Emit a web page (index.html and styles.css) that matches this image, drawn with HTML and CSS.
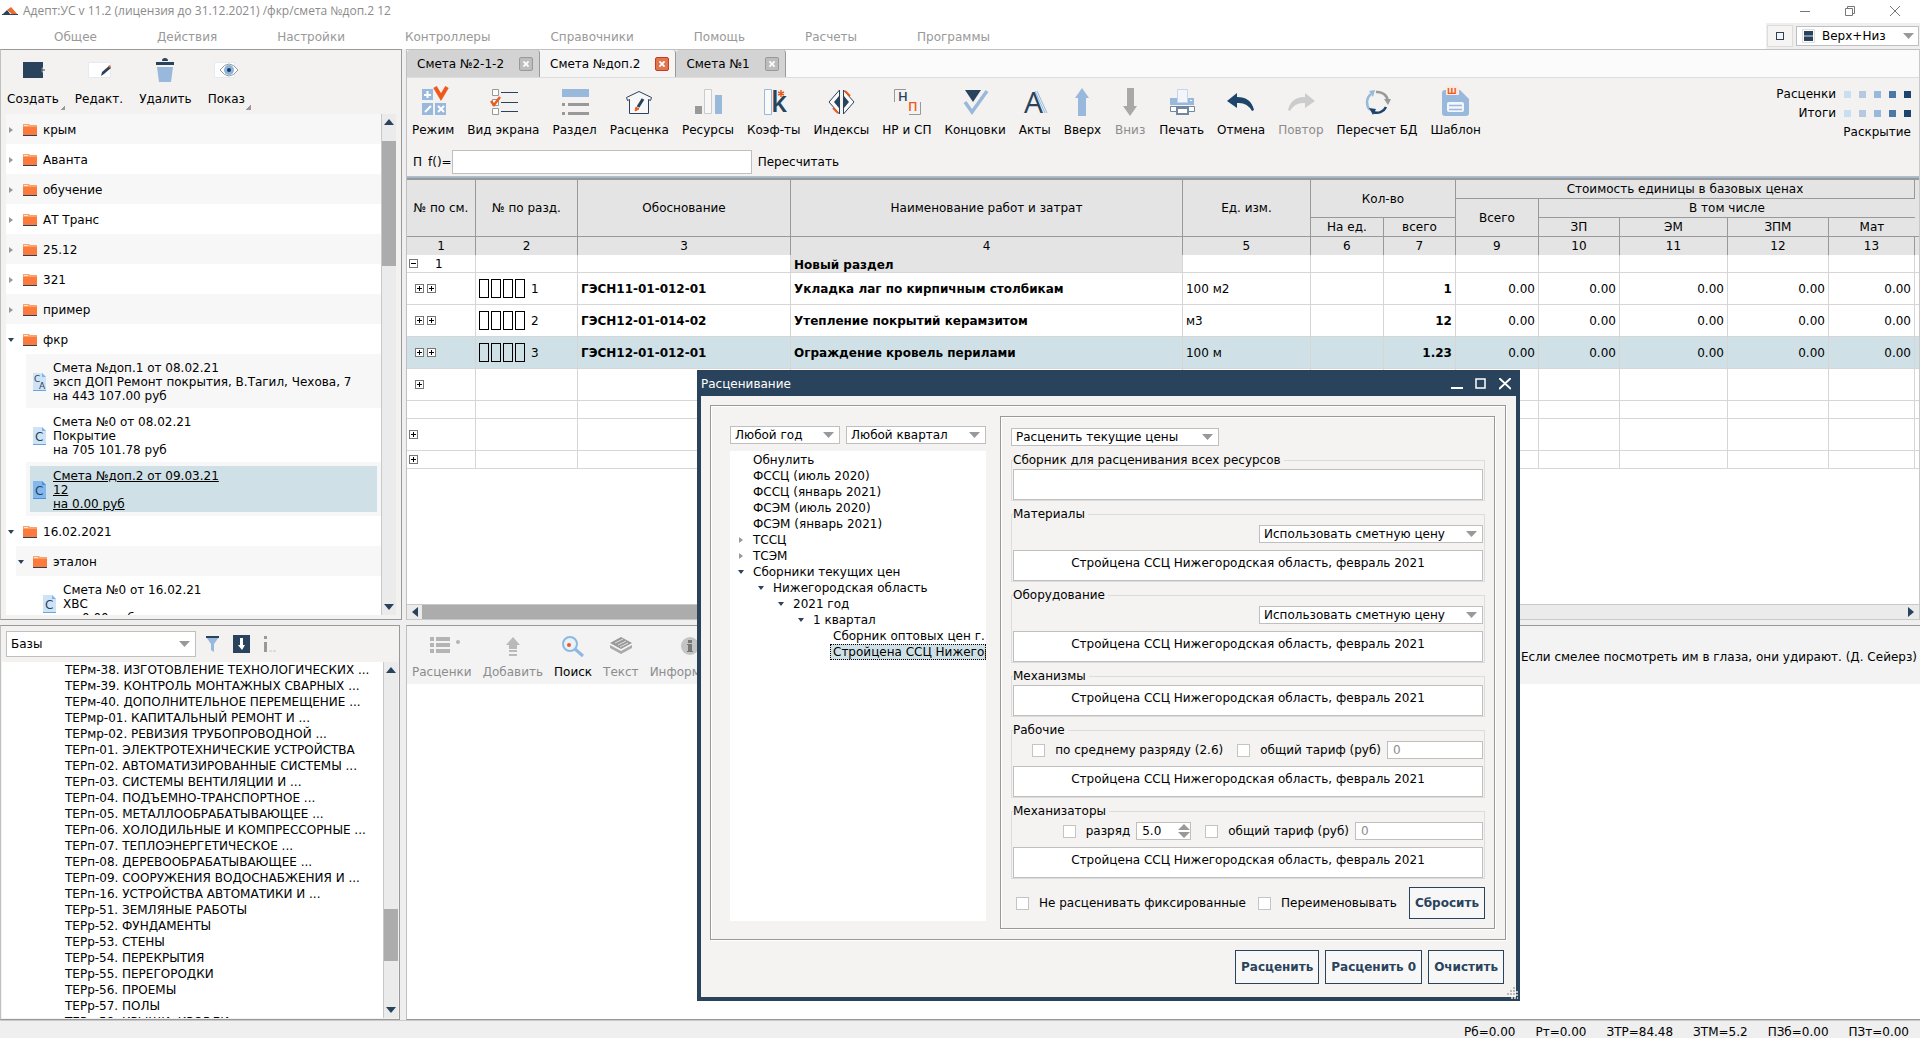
FILE: index.html
```html
<!DOCTYPE html>
<html lang="ru">
<head>
    <meta charset="UTF-8">
    <meta name="viewport" content="width=device-width, initial-scale=1.0">
    <title>Адепт:УС</title>
    <link rel="stylesheet" href="styles.css">
</head>
<body>
    <!-- Общие значки -->
    <svg class="sprite" aria-hidden="true">
        <symbol id="folder" viewBox="0 0 14 12">
            <path d="M0 0h6l1 1h7v10H0z" fill="#f9a36c"/>
            <path d="M0 3h14v8H0z" fill="#fb7a3c"/>
            <path d="M1 1h4v1H1z" fill="#ffe6d6"/>
            <path d="M0 11h14v1H0z" fill="#2a435c"/>
        </symbol>
        <symbol id="doc" viewBox="0 0 14 18">
            <path d="M0 0h9l4 4v13H0z" fill="#cfe3f7"/>
            <path d="M9 0l4 4H9z" fill="#7fb2e6"/>
            <path d="M0 17h13v1H0z" fill="#6aa5e0"/>
        </symbol>
        <symbol id="doc-open" viewBox="0 0 14 18">
            <path d="M0 0h9l4 4v13H0z" fill="#82b8ee"/>
            <path d="M9 0l4 4H9z" fill="#4d91d8"/>
            <path d="M0 17h13v1H0z" fill="#4d91d8"/>
        </symbol>
        <symbol id="closed" viewBox="0 0 6 8"><path d="M1 1l4 3-4 3z" fill="#999"/></symbol>
        <symbol id="opened" viewBox="0 0 6 8"><path d="M0 2h6L3 6z" fill="#2a435c"/></symbol>
        <symbol id="cross" viewBox="0 0 14 14"><path d="M4 4l6 6M10 4l-6 6" stroke="#fff" stroke-width="2"/></symbol>
        <symbol id="up" viewBox="0 0 10 6"><path d="M0 6h10L5 0z" fill="#2a435c"/></symbol>
        <symbol id="down" viewBox="0 0 10 6"><path d="M0 0h10L5 6z" fill="#2a435c"/></symbol>
        <symbol id="left" viewBox="0 0 6 10"><path d="M6 0v10L0 5z" fill="#2a435c"/></symbol>
        <symbol id="right" viewBox="0 0 6 10"><path d="M0 0v10l6-5z" fill="#2a435c"/></symbol>
    </svg>

    <div class="app">
        <header class="titlebar">
            <svg class="logo" viewBox="0 0 16 8"><path d="M0 8l5-5 4 5z" fill="#2a435c"/><path d="M5 3l4-3 7 8h-5z" fill="#ea6a2f"/><path d="M0 7h16v1H0z" fill="#2a435c"/></svg>
            <span class="title">Адепт:УС v 11.2 (лицензия до 31.12.2021) /фкр/смета №доп.2 12</span>
            <div class="window-buttons">
                <button aria-label="Свернуть"><svg viewBox="0 0 10 10"><path d="M0 5.5h10" stroke="#777"/></svg></button>
                <button aria-label="Восстановить"><svg viewBox="0 0 10 10"><path d="M.5 2.5h7v7h-7zM2.5 2.5v-2h7v7h-2" fill="none" stroke="#777"/></svg></button>
                <button aria-label="Закрыть"><svg viewBox="0 0 10 10"><path d="M0 0l10 10M10 0L0 10" stroke="#777"/></svg></button>
            </div>
        </header>

        <div class="menubar">
            <nav class="menu">
                <a href="#">Общее</a>
                <a href="#">Действия</a>
                <a href="#">Настройки</a>
                <a href="#">Контроллеры</a>
                <a href="#">Справочники</a>
                <a href="#">Помощь</a>
                <a href="#">Расчеты</a>
                <a href="#">Программы</a>
            </nav>
            <div class="view-switch">
                <button class="view-button" aria-label="Одно окно"><span></span></button>
                <select class="select layout" aria-label="Расположение"><option>Верх+Низ</option></select>
            </div>
        </div>

        <main class="workspace">
            <!-- Дерево смет -->
            <section class="panel projects">
                <div class="projects-tools">
                    <button class="tool menu-tool">
                        <svg viewBox="0 0 24 26"><path d="M2 5h20v5a3.5 3.5 0 0 0 0 6v5H2z" fill="#2a435c"/><path d="M18 13h6M21 10v6" stroke="#2a435c"/></svg>
                        <span>Создать</span>
                    </button>
                    <button class="tool">
                        <svg viewBox="0 0 24 26"><path d="M1.5 5.5h22v15h-22z" fill="#fff" stroke="#e3eaf2"/><path d="M14 19l1-4 7-6 2 2-7 6z" fill="#2a435c"/><path d="M21 9l2-1 1 2-1 1z" fill="#ea6a2f"/></svg>
                        <span>Редакт.</span>
                    </button>
                    <button class="tool">
                        <svg viewBox="0 0 24 26"><path d="M9 4a3 3 0 0 1 6 0z" fill="#2a435c"/><path d="M3 5h18v3H3z" fill="#2a435c"/><path d="M4 10h16l-2 15H6z" fill="#98b9dc"/></svg>
                        <span>Удалить</span>
                    </button>
                    <button class="tool menu-tool">
                        <svg viewBox="0 0 24 26"><path d="M.5 5.5h20v15H.5z" fill="#fff" stroke="#e3eaf2"/><path d="M6 13q9-12 18 0q-9 12-18 0z" fill="#fff" stroke="#999"/><circle cx="15" cy="13" r="5" fill="#8db4df"/><circle cx="15" cy="13" r="2" fill="#1c3a5c"/></svg>
                        <span>Показ</span>
                    </button>
                </div>
                <div class="scroll-area">
                    <ul class="tree">
                        <li class="folder odd"><svg class="arrow"><use href="#closed"/></svg><svg class="icon"><use href="#folder"/></svg>крым</li>
                        <li class="folder"><svg class="arrow"><use href="#closed"/></svg><svg class="icon"><use href="#folder"/></svg>Аванта</li>
                        <li class="folder odd"><svg class="arrow"><use href="#closed"/></svg><svg class="icon"><use href="#folder"/></svg>обучение</li>
                        <li class="folder"><svg class="arrow"><use href="#closed"/></svg><svg class="icon"><use href="#folder"/></svg>АТ Транс</li>
                        <li class="folder odd"><svg class="arrow"><use href="#closed"/></svg><svg class="icon"><use href="#folder"/></svg>25.12</li>
                        <li class="folder"><svg class="arrow"><use href="#closed"/></svg><svg class="icon"><use href="#folder"/></svg>321</li>
                        <li class="folder odd"><svg class="arrow"><use href="#closed"/></svg><svg class="icon"><use href="#folder"/></svg>пример</li>
                        <li class="folder"><svg class="arrow"><use href="#opened"/></svg><svg class="icon"><use href="#folder"/></svg>фкр</li>
                        <li class="estimate odd"><svg class="doc" viewBox="0 0 14 18"><use href="#doc"/><text x="1" y="9" class="doc-letter small">С</text><text x="6" y="16" class="doc-letter small">А</text></svg><span>Смета №доп.1 от 08.02.21<br>эксп ДОП Ремонт покрытия, В.Тагил, Чехова, 7<br>на 443 107.00 руб</span></li>
                        <li class="estimate"><svg class="doc" viewBox="0 0 14 18"><use href="#doc"/><text x="2" y="14" class="doc-letter">С</text></svg><span>Смета №0 от 08.02.21<br>Покрытие<br>на 705 101.78 руб</span></li>
                        <li class="estimate odd current"><svg class="doc" viewBox="0 0 14 18"><use href="#doc-open"/><text x="2" y="14" class="doc-letter">С</text></svg><span>Смета №доп.2 от 09.03.21<br>12<br>на 0.00 руб</span></li>
                        <li class="folder"><svg class="arrow"><use href="#opened"/></svg><svg class="icon"><use href="#folder"/></svg>16.02.2021</li>
                        <li class="folder odd nested"><svg class="arrow"><use href="#opened"/></svg><svg class="icon"><use href="#folder"/></svg>эталон</li>
                        <li class="estimate nested"><svg class="doc" viewBox="0 0 14 18"><use href="#doc"/><text x="2" y="14" class="doc-letter">С</text></svg><span>Смета №0 от 16.02.21<br>ХВС<br>на 0.00 руб</span></li>
                    </ul>
                    <div class="scrollbar">
                        <svg><use href="#up"/></svg>
                        <div class="track"><div class="thumb" style="height: 28%"></div></div>
                        <svg><use href="#down"/></svg>
                    </div>
                </div>
            </section>

            <!-- Смета -->
            <section class="editor">
                <div class="tabs">
                    <div class="tab"><a href="#">Смета №2-1-2</a><button aria-label="Закрыть вкладку"><svg><use href="#cross"/></svg></button></div>
                    <div class="tab active"><a href="#">Смета №доп.2</a><button aria-label="Закрыть вкладку"><svg><use href="#cross"/></svg></button></div>
                    <div class="tab"><a href="#">Смета №1</a><button aria-label="Закрыть вкладку"><svg><use href="#cross"/></svg></button></div>
                </div>
                <div class="editor-tools">
                    <div class="toolbar">
                        <button class="tool">
                            <svg viewBox="0 0 32 32"><path d="M5 3h11v11H5zM5 17h11v12H5zM18 17h11v12H18z" fill="#98b9dc"/><path d="M7 9h7M10.5 5v7M8 26l6-6M21 20l6 6M27 20l-6 6" stroke="#fff" stroke-width="2"/><path d="M18 1l6 10 6-10" fill="none" stroke="#ee5a1c" stroke-width="4"/></svg>
                            <span>Режим</span>
                        </button>
                        <button class="tool">
                            <svg viewBox="0 0 32 32"><path d="M5.5 3.5h6v6h-6zM5.5 13.5h6v6h-6zM5.5 22.5h6v6h-6z" fill="#fff" stroke="#999"/><path d="M14 6.5h17M14 16.5h17M14 25.5h17" stroke="#2a435c"/><path d="M4 15l3 4 6-8" fill="none" stroke="#ee5a1c" stroke-width="2.5"/></svg>
                            <span>Вид экрана</span>
                        </button>
                        <button class="tool">
                            <svg viewBox="0 0 32 32"><path d="M3 3h27v8H3z" fill="#98b9dc"/><path d="M3 17h3v3H3zM9 17h21v3H9zM3 26h3v3H3zM9 26h21v3H9z" fill="#999"/></svg>
                            <span>Раздел</span>
                        </button>
                        <button class="tool">
                            <svg viewBox="0 0 32 32"><path d="M16 5.5L3.5 11.5l1 3 2-1V27.5h19V13.5l2 1 1-3z" fill="#f8f8f8" stroke="#2a435c"/><path d="M15 21l5-8" stroke="#2a435c" stroke-width="3"/><path d="M12 25l1-4 3 2z" fill="#ee5a1c" stroke="#ee5a1c"/></svg>
                            <span>Расценка</span>
                        </button>
                        <button class="tool">
                            <svg viewBox="0 0 32 32"><path d="M3 20h7v8H3z" fill="#999"/><path d="M12.5 3.5h7v24h-7z" fill="#f8f8f8" stroke="#ccc"/><path d="M23 9h7v19h-7z" fill="#98b9dc"/></svg>
                            <span>Ресурсы</span>
                        </button>
                        <button class="tool">
                            <svg viewBox="0 0 32 32"><path d="M6.5 3.5h7v25h-7z" fill="#fafafa" stroke="#98b9dc"/><text x="13" y="26" class="letter big">k</text><path d="M23 4v7M20 6l6 3M26 6l-6 3" stroke="#ee5a1c" stroke-width="1.5"/></svg>
                            <span>Коэф-ты</span>
                        </button>
                        <button class="tool">
                            <svg viewBox="0 0 32 32"><path d="M14.5 4v24L4 16zM18.5 4v24L29 16z" fill="#fafafa" stroke="#2a435c"/><path d="M14 10v12l-5-6zM19 10v12l5-6z" fill="#2a435c"/><path d="M20 5l5 5M13 27l-5-5" stroke="#ee5a1c" stroke-width="2"/></svg>
                            <span>Индексы</span>
                        </button>
                        <button class="tool">
                            <svg viewBox="0 0 32 32"><path d="M3.5 16V3.5H15M29.5 16V28.5H18" fill="none" stroke="#999"/><text x="7" y="15" class="letter mid">Н</text><text x="17" y="25" class="letter mid orange">П</text></svg>
                            <span>НР и СП</span>
                        </button>
                        <button class="tool">
                            <svg viewBox="0 0 32 32"><path d="M6 4h16l-8 12z" fill="#2a435c"/><path d="M6 16l7 10L28 5" fill="none" stroke="#98b9dc" stroke-width="3.5"/></svg>
                            <span>Концовки</span>
                        </button>
                        <button class="tool">
                            <svg viewBox="0 0 32 32"><path d="M18 5l10 22M16 5l10 22" stroke="#98b9dc"/><text x="5" y="27" class="letter huge">А</text></svg>
                            <span>Акты</span>
                        </button>
                        <button class="tool">
                            <svg viewBox="0 0 32 32"><path d="M16 2l7 10h-3v18h-8V12H9z" fill="#98b9dc"/></svg>
                            <span>Вверх</span>
                        </button>
                        <button class="tool" disabled>
                            <svg viewBox="0 0 32 32"><path d="M16 30l7-10h-3V2h-7v18H9z" fill="#a8a8a8"/></svg>
                            <span>Вниз</span>
                        </button>
                        <button class="tool">
                            <svg viewBox="0 0 32 32"><path d="M4 12h24v7H4z" fill="#98b9dc"/><path d="M11.5 3.5h10v13h-10z" fill="#f2f6fc" stroke="#c4d6ea"/><path d="M4.5 20.5h24v5h-24z" fill="#fff" stroke="#7187a0"/><path d="M11 22h11v6H11z" fill="#fff" stroke="#7187a0" stroke-width="2"/><path d="M24 14.5h2" stroke="#fff"/></svg>
                            <span>Печать</span>
                        </button>
                        <button class="tool">
                            <svg viewBox="0 0 32 32"><path d="M2 15l10-8v4q14 0 17 13l-2 1Q22 16 12 17v5z" fill="#1d446b"/></svg>
                            <span>Отмена</span>
                        </button>
                        <button class="tool" disabled>
                            <svg viewBox="0 0 32 32"><path d="M30 15L20 7v4Q6 11 3 24l2 1q5-9 15-8v5z" fill="#ccc"/></svg>
                            <span>Повтор</span>
                        </button>
                        <button class="tool">
                            <svg viewBox="0 0 32 32"><g fill="none" stroke-width="2.5"><path d="M9 24a11 11 0 0 1 1-16" stroke="#98b9dc"/><path d="M15 6a10.5 10.5 0 0 1 12 10" stroke="#999"/><path d="M25 21a10 10 0 0 1-13 5" stroke="#1d446b"/></g><path d="M8 5l6-1-2 7z" fill="#98b9dc"/><path d="M23 13h7l-3 6z" fill="#999"/><path d="M8 22l7 1-3 6z" fill="#1d446b"/></svg>
                            <span>Пересчет БД</span>
                        </button>
                        <button class="tool">
                            <svg viewBox="0 0 32 32"><path d="M5 4h15l9 9v14a3 3 0 0 1-3 3H5a3 3 0 0 1-3-3V7a3 3 0 0 1 3-3z" fill="#98b9dc"/><rect x="7" y="16" width="17" height="10" rx="2" fill="#f3f7fb"/><path d="M9 19.5h13M9 23.5h13" stroke="#98b9dc" stroke-width="1.5"/><path d="M6 0h13v9H6z" fill="#fbe9df"/><text x="7" y="8" class="letter tiny">Ш</text></svg>
                            <span>Шаблон</span>
                        </button>
                        <div class="levels">
                            <div class="level-row">Расценки <i class="l1"></i><i class="l2"></i><i class="l3"></i><i class="l4"></i><i class="l5"></i></div>
                            <div class="level-row">Итоги <i class="l1"></i><i class="l2"></i><i class="l3"></i><i class="l4"></i><i class="l5"></i></div>
                            <div class="level-row">Раскрытие</div>
                        </div>
                    </div>
                    <div class="formula">
                        <span>П</span>
                        <label for="formula">f()=</label>
                        <input type="text" id="formula">
                        <button class="link-button">Пересчитать</button>
                    </div>
                </div>
                <div class="sheet">
                    <table class="grid">
                        <colgroup>
                            <col class="w-num"><col class="w-sec"><col class="w-code"><col><col class="w-unit"><col class="w-per"><col class="w-qty">
                            <col class="w-total"><col class="w-zp"><col class="w-em"><col class="w-zpm"><col class="w-mat"><col class="w-tail">
                        </colgroup>
                        <thead>
                            <tr>
                                <th rowspan="3">№ по см.</th>
                                <th rowspan="3">№ по разд.</th>
                                <th rowspan="3">Обоснование</th>
                                <th rowspan="3">Наименование работ и затрат</th>
                                <th rowspan="3">Ед. изм.</th>
                                <th colspan="2" rowspan="2">Кол-во</th>
                                <th colspan="5">Стоимость единицы в базовых ценах</th>
                                <th rowspan="3"></th>
                            </tr>
                            <tr><th rowspan="2">Всего</th><th colspan="4">В том числе</th></tr>
                            <tr><th>На ед.</th><th>всего</th><th>ЗП</th><th>ЭМ</th><th>ЗПМ</th><th>Мат</th></tr>
                            <tr class="numbers"><th>1</th><th>2</th><th>3</th><th>4</th><th>5</th><th>6</th><th>7</th><th>9</th><th>10</th><th>11</th><th>12</th><th>13</th><th></th></tr>
                        </thead>
                        <tbody>
                            <tr class="short"><td><div class="toggles outer"><button class="toggle" aria-label="Свернуть раздел"></button><span>1</span></div></td><td></td><td></td><td class="section-name">Новый раздел</td><td></td><td></td><td></td><td></td><td></td><td></td><td></td><td></td><td></td></tr>
                            <tr><td><div class="toggles"><button class="toggle plus" aria-label="Раскрыть"></button><button class="toggle plus" aria-label="Раскрыть все"></button></div></td><td><div class="marks"><i></i><i></i><i></i><i></i><span>1</span></div></td><td class="bold">ГЭСН11-01-012-01</td><td class="bold">Укладка лаг по кирпичным столбикам</td><td>100 м2</td><td></td><td class="number bold">1</td><td class="number">0.00</td><td class="number">0.00</td><td class="number">0.00</td><td class="number">0.00</td><td class="number">0.00</td><td></td></tr>
                            <tr><td><div class="toggles"><button class="toggle plus" aria-label="Раскрыть"></button><button class="toggle plus" aria-label="Раскрыть все"></button></div></td><td><div class="marks"><i></i><i></i><i></i><i></i><span>2</span></div></td><td class="bold">ГЭСН12-01-014-02</td><td class="bold">Утепление покрытий керамзитом</td><td>м3</td><td></td><td class="number bold">12</td><td class="number">0.00</td><td class="number">0.00</td><td class="number">0.00</td><td class="number">0.00</td><td class="number">0.00</td><td></td></tr>
                            <tr class="selected"><td><div class="toggles"><button class="toggle plus" aria-label="Раскрыть"></button><button class="toggle plus" aria-label="Раскрыть все"></button></div></td><td><div class="marks"><i></i><i></i><i></i><i></i><span>3</span></div></td><td class="bold">ГЭСН12-01-012-01</td><td class="bold">Ограждение кровель перилами</td><td>100 м</td><td></td><td class="number bold">1.23</td><td class="number">0.00</td><td class="number">0.00</td><td class="number">0.00</td><td class="number">0.00</td><td class="number">0.00</td><td></td></tr>
                            <tr><td><div class="toggles"><button class="toggle plus" aria-label="Раскрыть"></button></div></td><td></td><td></td><td></td><td></td><td></td><td></td><td></td><td></td><td></td><td></td><td></td><td></td></tr>
                            <tr class="short"><td></td><td></td><td></td><td></td><td></td><td></td><td></td><td></td><td></td><td></td><td></td><td></td><td></td></tr>
                            <tr><td><div class="toggles outer"><button class="toggle plus" aria-label="Раскрыть"></button></div></td><td></td><td></td><td></td><td></td><td></td><td></td><td></td><td></td><td></td><td></td><td></td><td></td></tr>
                            <tr class="short"><td><div class="toggles outer"><button class="toggle plus" aria-label="Раскрыть"></button></div></td><td></td><td></td><td></td><td></td><td></td><td></td><td></td><td></td><td></td><td></td><td></td><td></td></tr>
                        </tbody>
                    </table>
                </div>
                <div class="scrollbar horizontal">
                    <svg><use href="#left"/></svg>
                    <div class="track"><div class="thumb" style="width: 48%"></div></div>
                    <svg><use href="#right"/></svg>
                </div>
            </section>

            <!-- Нормативные базы -->
            <section class="panel bases">
                <div class="bases-tools">
                    <select class="select" aria-label="Раздел справочника"><option>Базы</option></select>
                    <button class="icon-button" aria-label="Фильтр"><svg viewBox="0 0 17 18"><path d="M0 2h13L8 9v8l-3-2V9z" fill="#98b9dc"/><path d="M0 1h13v2H0z" fill="#2a435c"/></svg></button>
                    <button class="icon-button" aria-label="Загрузить"><svg viewBox="0 0 17 18"><path d="M0 0h17v18H0z" fill="#2a435c"/><path d="M7 3h3v7h2l-3 5-4-5h2z" fill="#fff"/></svg></button>
                    <button class="icon-button" aria-label="Сведения"><svg viewBox="0 0 17 18"><path d="M4 1h3v3H4zM4 7h3v10H4z" fill="#999"/><path d="M9 15h3v2H9zM13 15h3v2h-3z" fill="#ddd"/></svg></button>
                </div>
                <div class="scroll-area">
                    <ul class="base-list">
                        <li>ТЕРм-38. ИЗГОТОВЛЕНИЕ ТЕХНОЛОГИЧЕСКИХ ...</li>
                        <li>ТЕРм-39. КОНТРОЛЬ МОНТАЖНЫХ СВАРНЫХ ...</li>
                        <li>ТЕРм-40. ДОПОЛНИТЕЛЬНОЕ ПЕРЕМЕЩЕНИЕ ...</li>
                        <li>ТЕРмр-01. КАПИТАЛЬНЫЙ РЕМОНТ И ...</li>
                        <li>ТЕРмр-02. РЕВИЗИЯ ТРУБОПРОВОДНОЙ ...</li>
                        <li>ТЕРп-01. ЭЛЕКТРОТЕХНИЧЕСКИЕ УСТРОЙСТВА</li>
                        <li>ТЕРп-02. АВТОМАТИЗИРОВАННЫЕ СИСТЕМЫ ...</li>
                        <li>ТЕРп-03. СИСТЕМЫ ВЕНТИЛЯЦИИ И ...</li>
                        <li>ТЕРп-04. ПОДЪЕМНО-ТРАНСПОРТНОЕ ...</li>
                        <li>ТЕРп-05. МЕТАЛЛООБРАБАТЫВАЮЩЕЕ ...</li>
                        <li>ТЕРп-06. ХОЛОДИЛЬНЫЕ И КОМПРЕССОРНЫЕ ...</li>
                        <li>ТЕРп-07. ТЕПЛОЭНЕРГЕТИЧЕСКОЕ ...</li>
                        <li>ТЕРп-08. ДЕРЕВООБРАБАТЫВАЮЩЕЕ ...</li>
                        <li>ТЕРп-09. СООРУЖЕНИЯ ВОДОСНАБЖЕНИЯ И ...</li>
                        <li>ТЕРп-16. УСТРОЙСТВА АВТОМАТИКИ И ...</li>
                        <li>ТЕРр-51. ЗЕМЛЯНЫЕ РАБОТЫ</li>
                        <li>ТЕРр-52. ФУНДАМЕНТЫ</li>
                        <li>ТЕРр-53. СТЕНЫ</li>
                        <li>ТЕРр-54. ПЕРЕКРЫТИЯ</li>
                        <li>ТЕРр-55. ПЕРЕГОРОДКИ</li>
                        <li>ТЕРр-56. ПРОЕМЫ</li>
                        <li>ТЕРр-57. ПОЛЫ</li>
                        <li>ТЕРр-58. КРЫШИ, КРОВЛИ</li>
                    </ul>
                    <div class="scrollbar">
                        <svg><use href="#up"/></svg>
                        <div class="track lower"><div class="thumb" style="height: 19%"></div></div>
                        <svg><use href="#down"/></svg>
                    </div>
                </div>
            </section>

            <section class="panel search">
                <div class="search-tools">
                    <button class="tool" disabled>
                        <svg viewBox="0 0 32 24"><path d="M4 3h4v4H4zM10 3h14v4H10zM4 9h4v4H4zM10 9h14v4H10zM4 15h4v4H4zM10 15h14v4H10z" fill="#b4b4b4"/><circle cx="32" cy="8" r="2" fill="#b4b4b4"/></svg>
                        <span>Расценки</span>
                    </button>
                    <button class="tool" disabled>
                        <svg viewBox="0 0 32 24"><path d="M16 3l7 8h-3v4h-8v-4H9zM12 16h8v2h-8zM12 20h8v2h-8z" fill="#b9b9b9"/></svg>
                        <span>Добавить</span>
                    </button>
                    <button class="tool">
                        <svg viewBox="0 0 32 24"><circle cx="13" cy="10" r="7" fill="#e9f2fb" stroke="#8db8e2" stroke-width="2"/><path d="M18 15l8 7" stroke="#8db8e2" stroke-width="3"/><circle cx="12" cy="11" r="2" fill="#ee5a1c"/></svg>
                        <span>Поиск</span>
                    </button>
                    <button class="tool" disabled>
                        <svg viewBox="0 0 32 24"><path d="M5 11l11 6 11-6v3l-11 6-11-6z" fill="#aaa"/><path d="M5 9l11-6 11 6-11 6z" fill="#999"/><path d="M10 9l8-4M13 11l8-4M15 13l8-4" stroke="#e2e2e2"/></svg>
                        <span>Текст</span>
                    </button>
                    <button class="tool" disabled>
                        <svg viewBox="0 0 32 24"><circle cx="16" cy="12" r="9" fill="#c4c4c4"/><path d="M14 6h4v3h-4zM13 10h5v7h1v1h-6v-1h1v-6h-1z" fill="#777"/></svg>
                        <span>Информация</span>
                    </button>
                    <span class="quote">Если смелее посмотреть им в глаза, они удирают. (Д. Сейерз)</span>
                </div>
            </section>
        </main>

        <footer class="statusbar">
            <span>Рб=0.00</span>
            <span>Рт=0.00</span>
            <span>ЗТР=84.48</span>
            <span>ЗТМ=5.2</span>
            <span>ПЗб=0.00</span>
            <span>ПЗт=0.00</span>
        </footer>
    </div>

    <!-- Окно расценивания -->
    <div class="dialog" role="dialog" aria-labelledby="dialog-title">
        <div class="dialog-title">
            <span id="dialog-title">Расценивание</span>
            <div class="dialog-buttons">
                <button aria-label="Свернуть"><svg viewBox="0 0 12 12"><path d="M0 10h12" stroke="#fff" stroke-width="2"/></svg></button>
                <button aria-label="Развернуть"><svg viewBox="0 0 12 12"><path d="M1 1h9v9H1z" fill="none" stroke="#fff" stroke-width="1.5"/></svg></button>
                <button aria-label="Закрыть"><svg viewBox="0 0 12 12"><path d="M0 0l12 11M12 0L0 11" stroke="#fff" stroke-width="2"/></svg></button>
            </div>
        </div>
        <div class="dialog-body">
            <div class="frame outer-frame">
                <div class="collections">
                    <div class="period">
                        <select class="select year" aria-label="Год"><option>Любой год</option></select>
                        <select class="select quarter" aria-label="Квартал"><option>Любой квартал</option></select>
                    </div>
                    <ul class="price-tree">
                        <li>Обнулить</li>
                        <li>ФССЦ (июль 2020)</li>
                        <li>ФССЦ (январь 2021)</li>
                        <li>ФСЭМ (июль 2020)</li>
                        <li>ФСЭМ (январь 2021)</li>
                        <li><svg><use href="#closed"/></svg>ТССЦ</li>
                        <li><svg><use href="#closed"/></svg>ТСЭМ</li>
                        <li><svg><use href="#opened"/></svg>Сборники текущих цен
                            <ul>
                                <li><svg><use href="#opened"/></svg>Нижегородская область
                                    <ul>
                                        <li><svg><use href="#opened"/></svg>2021 год
                                            <ul>
                                                <li><svg><use href="#opened"/></svg>1 квартал
                                                    <ul>
                                                        <li>Сборник оптовых цен г. Нижний Новгород</li>
                                                        <li><span class="chosen">Стройцена ССЦ Нижегородская область</span></li>
                                                    </ul>
                                                </li>
                                            </ul>
                                        </li>
                                    </ul>
                                </li>
                            </ul>
                        </li>
                    </ul>
                </div>
                <form class="frame pricing">
                    <select class="select mode" aria-label="Режим расценивания"><option>Расценить текущие цены</option></select>
                    <fieldset>
                        <legend>Сборник для расценивания всех ресурсов</legend>
                        <output class="source"></output>
                    </fieldset>
                    <fieldset>
                        <legend>Материалы</legend>
                        <div class="options"><select class="select price" aria-label="Цена материалов"><option>Использовать сметную цену</option></select></div>
                        <output class="source">Стройцена ССЦ Нижегородская область, февраль 2021</output>
                    </fieldset>
                    <fieldset>
                        <legend>Оборудование</legend>
                        <div class="options"><select class="select price" aria-label="Цена оборудования"><option>Использовать сметную цену</option></select></div>
                        <output class="source">Стройцена ССЦ Нижегородская область, февраль 2021</output>
                    </fieldset>
                    <fieldset>
                        <legend>Механизмы</legend>
                        <output class="source">Стройцена ССЦ Нижегородская область, февраль 2021</output>
                    </fieldset>
                    <fieldset>
                        <legend>Рабочие</legend>
                        <div class="options">
                            <label class="check"><input type="checkbox">по среднему разряду (2.6)</label>
                            <label class="check"><input type="checkbox">общий тариф (руб)</label>
                            <input type="text" class="rate short-rate" value="0" aria-label="Тариф рабочих" disabled>
                        </div>
                        <output class="source">Стройцена ССЦ Нижегородская область, февраль 2021</output>
                    </fieldset>
                    <fieldset>
                        <legend>Механизаторы</legend>
                        <div class="options">
                            <label class="check"><input type="checkbox">разряд</label>
                            <input type="number" class="grade" value="5.0" step="0.1" aria-label="Разряд механизаторов">
                            <label class="check"><input type="checkbox">общий тариф (руб)</label>
                            <input type="text" class="rate" value="0" aria-label="Тариф механизаторов" disabled>
                        </div>
                        <output class="source">Стройцена ССЦ Нижегородская область, февраль 2021</output>
                    </fieldset>
                    <div class="final-row">
                        <label class="check"><input type="checkbox">Не расценивать фиксированные</label>
                        <label class="check"><input type="checkbox">Переименовывать</label>
                        <button type="button" class="action">Сбросить</button>
                    </div>
                </form>
            </div>
            <div class="dialog-actions">
                <button class="action">Расценить</button>
                <button class="action">Расценить 0</button>
                <button class="action">Очистить</button>
            </div>
            <svg class="grip" viewBox="0 0 12 12"><path d="M7 0h2v2H7zM4 3h2v2H4zM7 3h2v2H7zM1 6h2v2H1zM4 6h2v2H4zM7 6h2v2H7zM10 4h2v2h-2zM10 7h2v2h-2zM5 10h2v2H5zM8 10h2v2H8zM11 10h1v2h-1z" fill="#bbb"/></svg>
        </div>
    </div>
</body>
</html>
```
FILE: styles.css
```css
* {
    box-sizing: border-box;
}
body {
    margin: 0;
    font-family: "DejaVu Sans", Verdana, sans-serif;
    font-size: 12px;
    line-height: 16px;
    color: #000;
    background-color: #efefef;
    overflow: hidden;
}
button, select, input {
    font: inherit;
    color: inherit;
    margin: 0;
}
button {
    padding: 0;
    border: 0;
    background: none;
    white-space: nowrap;
}
a {
    color: inherit;
    text-decoration: none;
}
ul {
    list-style: none;
    margin: 0;
    padding: 0;
}
svg {
    display: block;
    flex: none;
}
.sprite {
    display: none;
}
.app {
    height: 100vh;
    display: flex;
    flex-direction: column;
}

/* Заголовок и меню */
.titlebar {
    display: flex;
    align-items: center;
    height: 23px;
    padding: 0 20px 2px 2px;
    background-color: #fff;
    color: #8b8b8b;
    font-family: "Open Sans", sans-serif;
}
.logo {
    width: 16px;
    height: 8px;
    margin-right: 5px;
}
.title {
    flex: 1;
}
.window-buttons {
    display: flex;
    gap: 35px;
}
.window-buttons svg {
    width: 10px;
    height: 10px;
}
.menubar {
    display: flex;
    justify-content: space-between;
    height: 26px;
    background-color: #fff;
    color: #999;
}
.menu {
    display: flex;
    align-items: center;
    gap: 60px;
    padding: 2px 0 0 54px;
}
.view-switch {
    display: flex;
    align-items: center;
    gap: 3px;
    padding: 0 1px;
    background-color: #efefef;
    color: #000;
}
.view-button {
    display: flex;
    align-items: center;
    justify-content: center;
    width: 26px;
    height: 22px;
    border: 1px solid #dcdcdc;
    background-color: #f5f4f3;
}
.view-button span {
    width: 8px;
    height: 8px;
    border: 1px solid #2a435c;
}
.select {
    appearance: none;
    height: 18px;
    padding: 0 20px 0 4px;
    border: 1px solid #bfbfbf;
    border-radius: 0;
    line-height: 16px;
    background: #fff url("data:image/svg+xml,%3Csvg xmlns='http://www.w3.org/2000/svg' width='11' height='6'%3E%3Cpath d='M0 0h11L5.5 6z' fill='%23999'/%3E%3C/svg%3E") no-repeat right 5px center;
}
.select.layout {
    width: 123px;
    height: 20px;
    padding-left: 25px;
    background-image: url("data:image/svg+xml,%3Csvg xmlns='http://www.w3.org/2000/svg' width='11' height='6'%3E%3Cpath d='M0 0h11L5.5 6z' fill='%23999'/%3E%3C/svg%3E"), url("data:image/svg+xml,%3Csvg xmlns='http://www.w3.org/2000/svg' width='13' height='14'%3E%3Cpath d='M.5.5h12v13H.5z' fill='none' stroke='%23ddd'/%3E%3Cpath d='M2 2h9v4H2zM2 8h9v4H2z' fill='%232a435c'/%3E%3Cpath d='M2 6h9v2H2z' fill='%237f93a6'/%3E%3C/svg%3E");
    background-position: right 4px center, 5px center;
    background-repeat: no-repeat;
}

/* Рабочая область */
.workspace {
    flex: 1;
    min-height: 0;
    display: grid;
    grid-template-columns: 402px minmax(0, 1fr);
    grid-template-rows: minmax(0, 13fr) minmax(0, 9fr);
    gap: 5px 4px;
}
.panel {
    display: flex;
    flex-direction: column;
    min-height: 0;
    border: 1px solid #999;
    border-left-color: #c0c0c0;
}
.tool {
    display: flex;
    flex-direction: column;
    align-items: center;
    gap: 4px;
}
.tool:disabled {
    color: #8c8c8c;
}
.tool svg {
    width: 32px;
    height: 32px;
    overflow: visible;
}
.letter {
    font-family: "Open Sans", sans-serif;
    font-weight: 600;
    fill: #2a435c;
}
.letter.big {
    font-size: 28px;
}
.letter.huge {
    font-size: 30px;
    font-weight: 400;
}
.letter.mid {
    font-size: 13px;
}
.letter.orange {
    fill: #ee5a1c;
}
.letter.tiny {
    font-size: 9px;
    font-weight: 700;
    fill: #ee5a1c;
}
.scroll-area {
    flex: 1;
    min-height: 0;
    display: flex;
}
.scrollbar {
    width: 15px;
    flex: none;
    display: flex;
    flex-direction: column;
    align-items: center;
    padding: 5px 0;
    border-left: 1px solid #c9c9c9;
    background-color: #ebebeb;
}
.scrollbar svg {
    width: 10px;
    height: 6px;
}
.track {
    flex: 1;
    align-self: stretch;
    margin: 16px 0;
}
.track.lower {
    display: flex;
    flex-direction: column;
    justify-content: flex-end;
    margin-bottom: 46px;
}
.thumb {
    height: 100%;
    background-color: #acacac;
}
.scrollbar.horizontal {
    width: auto;
    height: 16px;
    flex-direction: row;
    padding: 0 5px;
    border: 1px solid #c9c9c9;
    border-width: 1px 0;
}
.horizontal svg {
    width: 6px;
    height: 10px;
}
.horizontal .track {
    margin: 0 5px 0 4px;
}

/* Дерево смет */
.projects {
    padding: 0 5px 4px;
    background-color: #f3f2f1;
}
.projects-tools {
    display: flex;
    gap: 16px;
    height: 64px;
    padding: 7px 0 0 1px;
}
.projects-tools .tool {
    justify-content: flex-start;
    gap: 8px;
    height: 54px;
}
.projects-tools .tool svg {
    width: 24px;
    height: 26px;
}
.menu-tool {
    background: linear-gradient(135deg, transparent 50%, #999 50%) no-repeat right bottom 1px / 5px 5px;
    padding-right: 6px;
    margin-right: -6px;
}
.tree {
    flex: 1;
    overflow: hidden;
    background-color: #fff;
}
.tree li {
    display: flex;
    align-items: center;
}
.tree .odd {
    background-color: #f7f7f7;
}
.folder {
    height: 30px;
    padding: 1px 0 0 2px;
}
.folder.nested {
    margin-left: 10px;
}
.arrow {
    width: 6px;
    height: 8px;
    margin-right: 9px;
}
.icon {
    width: 14px;
    height: 12px;
    margin-right: 6px;
}
.estimate {
    height: 54px;
    margin-left: 20px;
    padding: 1px 0 0 7px;
    line-height: 14px;
}
.estimate.nested {
    margin-left: 30px;
}
.doc {
    width: 14px;
    height: 18px;
    margin-right: 6px;
}
.doc-letter {
    font-size: 12px;
    fill: #2a435c;
}
.doc-letter.small {
    font-size: 9px;
}
.tree .estimate.current {
    border: 4px solid #f7f7f7;
    background-color: #cfe0e6;
    padding-left: 3px;
    text-decoration: underline;
}

/* Смета */
.editor {
    display: flex;
    flex-direction: column;
    min-height: 0;
    border-left: 1px solid #c0c0c0;
    border-right: 1px solid #c9c9c9;
}
.tabs {
    display: flex;
    height: 29px;
    border-top: 1px solid #c0c0c0;
    border-bottom: 1px solid #ddd;
    background-color: #fbfbfb;
}
.tab {
    display: flex;
    align-items: center;
    gap: 15px;
    padding: 0 6px 0 10px;
    border-right: 1px solid #999;
    border-radius: 3px 3px 0 0;
    background-color: #d3d3d3;
}
.tab.active {
    background-color: #f5f5f5;
}
.tab button {
    width: 14px;
    height: 14px;
    border: 1px solid #999;
    border-radius: 2px;
    background-color: #bdbdbd;
}
.tab.active button {
    border-color: #cf3a1d;
    background-color: #e0764f;
}
.tab svg {
    width: 12px;
    height: 12px;
}
.editor-tools {
    padding: 8px 8px 2px 5px;
    background-color: #f3f2f1;
    border-bottom: 1px solid #bbb;
}
.toolbar {
    display: flex;
    gap: 13px;
}
.levels {
    display: flex;
    flex-direction: column;
    align-items: flex-end;
    gap: 3px;
    margin-left: auto;
}
.level-row {
    display: flex;
    align-items: center;
    gap: 8px;
}
.level-row i {
    width: 7px;
    height: 7px;
}
.l1 { background-color: #c8dff2; }
.l2 { background-color: #b5cae0; }
.l3 { background-color: #98b9dc; }
.l4 { background-color: #4c78a8; }
.l5 { background-color: #1d446b; }
.formula {
    display: flex;
    align-items: center;
    padding-top: 10px;
}
.formula span {
    margin: 0 6px 0 1px;
}
.formula input {
    width: 300px;
    height: 24px;
    margin-right: 6px;
    border: 1px solid #bfbfbf;
    background-color: #fff;
}
.sheet {
    flex: 1;
    min-height: 0;
    overflow: hidden;
    background-color: #fff;
    border-top: 1px solid #98b9dc;
}
.grid {
    width: 100%;
    table-layout: fixed;
    border-collapse: separate;
    border-spacing: 0;
    border-top: 2px solid #999;
}
.w-num { width: 69px; }
.w-sec { width: 102px; }
.w-code { width: 213px; }
.w-unit { width: 128px; }
.w-per { width: 73px; }
.w-qty { width: 72px; }
.w-total { width: 83px; }
.w-zp { width: 81px; }
.w-em { width: 108px; }
.w-zpm { width: 101px; }
.w-mat { width: 86px; }
.w-tail { width: 4px; }
.grid th {
    height: 19px;
    padding: 0;
    font-weight: normal;
    background-color: #e4e4e4;
    border-right: 1px solid #999;
    border-bottom: 1px solid #999;
}
.grid .numbers th {
    height: 18px;
    border-bottom: 0;
}
.grid td {
    height: 32px;
    padding: 0 3px;
    border-right: 1px solid #d6d6d6;
    border-bottom: 1px solid #d6d6d6;
    white-space: nowrap;
}
.grid .short td {
    height: 18px;
    line-height: 14px;
}
.grid th:last-child, .grid td:last-child {
    padding: 0;
    border-right: 0;
}
.grid .section-name {
    background-color: #e4e4e4;
    font-weight: bold;
    vertical-align: bottom;
}
.bold {
    font-weight: bold;
}
.number {
    text-align: right;
}
.selected td {
    background-color: #cfe0e6;
}
.toggles {
    display: flex;
    align-items: center;
    gap: 3px;
    padding-left: 5px;
}
.toggles.outer {
    gap: 17px;
    margin-left: -6px;
}
.toggle {
    width: 9px;
    height: 9px;
    border: 1px solid #777;
    background: linear-gradient(#000, #000) no-repeat center / 5px 1px #fff;
}
.toggle.plus {
    background: linear-gradient(#000, #000) no-repeat center / 5px 1px, linear-gradient(#000, #000) no-repeat center / 1px 5px, #fff;
}
.marks {
    display: flex;
    align-items: center;
    gap: 2px;
}
.marks i {
    width: 10px;
    height: 19px;
    border: 1px solid #000;
}
.marks span {
    margin-left: 4px;
}

/* Нормативные базы */
.bases {
    margin-right: 2px;
    padding: 0 1px 1px;
    background-color: #f3f2f1;
}
.bases-tools {
    display: flex;
    align-items: center;
    gap: 10px;
    height: 36px;
    padding: 0 4px;
}
.bases-tools .select {
    width: 190px;
    height: 26px;
}
.icon-button svg {
    width: 17px;
    height: 18px;
}
.base-list {
    flex: 1;
    overflow: hidden;
    padding-left: 63px;
    background-color: #fff;
    white-space: nowrap;
}

/* Поиск */
.search {
    background-color: #fff;
    border-right: 0;
}
.search-tools {
    display: flex;
    gap: 11px;
    padding: 8px 3px 3px 5px;
    background-color: #f3f3f3;
}
.search-tools .tool {
    gap: 6px;
    padding-bottom: 1px;
}
.search-tools .tool svg {
    height: 24px;
}
.quote {
    margin-left: auto;
    align-self: center;
}
.statusbar {
    display: flex;
    justify-content: flex-end;
    gap: 20px;
    height: 18px;
    padding: 3px 11px 0;
    border-top: 1px solid #c9c9c9;
}

/* Окно расценивания */
.dialog {
    position: absolute;
    left: 697px;
    top: 370px;
    width: 823px;
    border: 4px solid #2a435c;
    border-top: 0;
    background-color: #f4f3f1;
}
.dialog-title {
    display: flex;
    align-items: center;
    justify-content: space-between;
    height: 26px;
    padding: 1px 5px 0 0;
    color: #fff;
    background-color: #2a435c;
}
.dialog-buttons {
    display: flex;
    gap: 12px;
}
.dialog-buttons svg {
    width: 12px;
    height: 12px;
}
.dialog-body {
    position: relative;
    padding: 9px 10px 13px 9px;
}
.frame {
    border: 1px solid #999;
    box-shadow: inset 1px 1px #fff, 1px 1px #fff;
}
.outer-frame {
    display: flex;
    gap: 14px;
    padding: 10px 10px 10px 19px;
}
.collections {
    display: flex;
    flex-direction: column;
    width: 256px;
    padding: 10px 0 8px;
}
.period {
    display: flex;
    gap: 6px;
    margin-bottom: 7px;
}
.year {
    width: 110px;
}
.quarter {
    width: 140px;
}
.price-tree {
    flex: 1;
    overflow: hidden;
    padding: 1px 0 0 23px;
    background-color: #fff;
    white-space: nowrap;
}
.price-tree ul {
    padding-left: 20px;
}
.price-tree svg {
    float: left;
    width: 6px;
    height: 8px;
    margin: 4px 9px 0 -15px;
}
.chosen {
    display: block;
    height: 16px;
    margin-left: -3px;
    padding-left: 2px;
    border: 1px dotted #000;
    line-height: 14px;
    background-color: #cfe0e6;
}
.pricing {
    flex: 1;
    padding: 11px 9px 9px 10px;
}
.mode {
    display: block;
    width: 208px;
    margin-bottom: 6px;
}
fieldset {
    margin: 0 0 5px;
    padding: 1px 1px 0;
    border: 1px solid #dcdcdc;
    min-width: 0;
}
legend {
    padding: 0 3px 0 0;
}
.options {
    display: flex;
    align-items: center;
    justify-content: flex-end;
    gap: 6px;
    padding: 2px 0 7px;
}
.price {
    width: 224px;
}
.source {
    display: block;
    height: 31px;
    padding-top: 4px;
    border: 1px solid #bfbfbf;
    background-color: #fff;
    text-align: center;
}
.check {
    display: flex;
    align-items: center;
    gap: 10px;
}
.check input {
    appearance: none;
    width: 13px;
    height: 13px;
    border: 1px solid #c4c4c4;
    background-color: #fff;
}
.options .check + .check, .grade + .check {
    margin-left: 8px;
}
.rate {
    width: 128px;
    height: 18px;
    padding: 0 5px;
    border: 1px solid #bfbfbf;
    color: #8c8c8c;
    background-color: #fff;
}
.short-rate {
    width: 96px;
}
.grade {
    appearance: textfield;
    width: 55px;
    height: 18px;
    padding: 0 5px;
    border: 1px solid #bfbfbf;
    background: #fff url("data:image/svg+xml,%3Csvg xmlns='http://www.w3.org/2000/svg' width='12' height='14'%3E%3Cpath d='M0 6h12L6 0zM0 8h12l-6 6z' fill='%23999'/%3E%3C/svg%3E") no-repeat right center;
}
.grade::-webkit-inner-spin-button {
    display: none;
}
.final-row {
    display: flex;
    align-items: center;
    justify-content: space-between;
    padding: 3px 0 0 5px;
}
.action {
    height: 34px;
    padding: 0 5px;
    border: 1px solid #2a435c;
    color: #2a435c;
    font-weight: bold;
    background-color: #f7f7f7;
}
.final-row .action {
    height: 32px;
}
.dialog-actions {
    display: flex;
    justify-content: flex-end;
    gap: 6px;
    padding: 10px 2px 0;
}
.grip {
    position: absolute;
    right: -2px;
    bottom: -2px;
    width: 12px;
    height: 12px;
}
```
